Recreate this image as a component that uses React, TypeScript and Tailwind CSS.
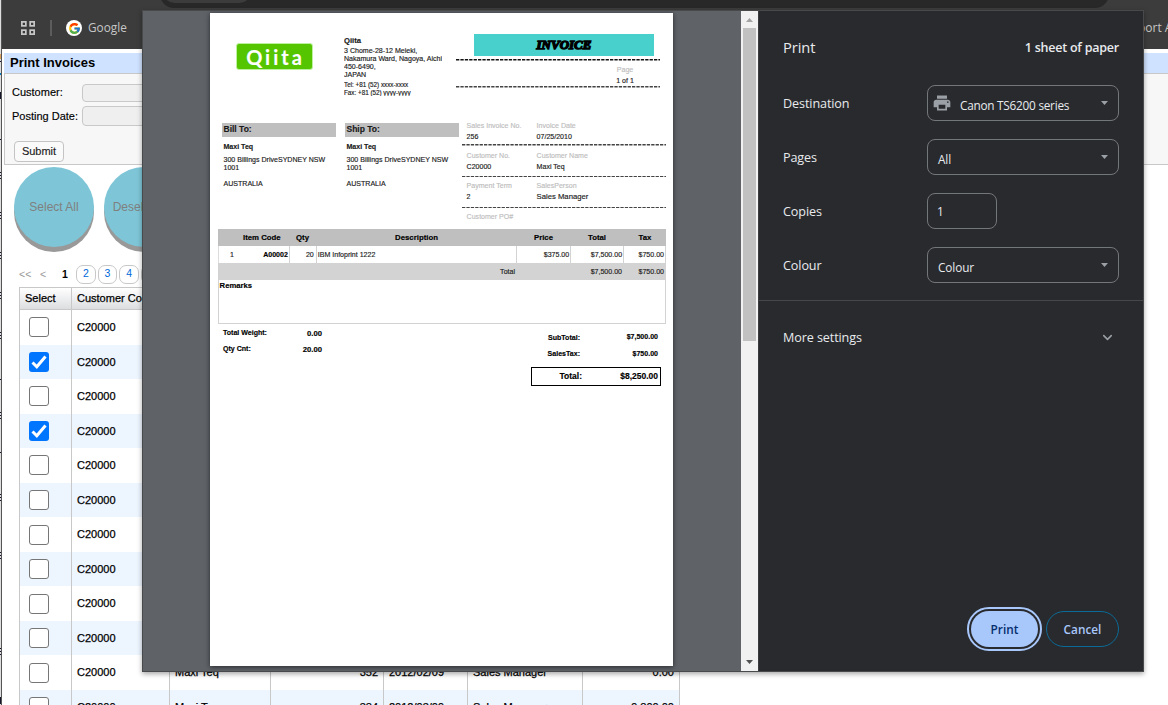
import { ReactNode } from 'react';
import { ChevronDown } from 'lucide-react';
import { FcGoogle } from 'react-icons/fc';
import { MdPrint } from 'react-icons/md';

interface InvoiceRow {
  customer: string;
  name: string;
  number: string;
  date: string;
  person: string;
  amount: string;
  checked?: boolean;
}

const base = { customer: 'C20000', name: 'Maxi Teq', number: '', date: '', person: '', amount: '' };

const rows: InvoiceRow[] = [
  base,
  { ...base, checked: true },
  base,
  { ...base, checked: true },
  base,
  base,
  base,
  base,
  base,
  base,
  { ...base, number: '352', date: '2012/02/09', person: 'Sales Manager', amount: '0.00' },
  { ...base, number: '384', date: '2012/03/09', person: 'Sales Manager', amount: '9,800.00' },
];

const Checkbox = ({ checked }: { checked?: boolean }) =>
  checked ? (
    <span className="block size-5 rounded-[3px] bg-[#0075ff]">
      <svg className="size-5" viewBox="0 0 20 20" fill="none" stroke="white" strokeWidth="3">
        <path d="M3.5 10.5 L7.8 14.8 L16.5 4.5" />
      </svg>
    </span>
  ) : (
    <span className="block size-5 rounded-[3px] border border-[#767676] bg-white" />
  );

// Sliver of the window that sits behind the browser
const BackgroundEdge = () => (
  <svg className="h-[705px] w-px shrink-0 bg-[#dedede]" viewBox="0 0 1 705" fill="#16162a">
    <rect y="54" width="1" height="5" fill="#d9a15c" />
    <rect y="61" width="1" height="1" />
    <rect y="73" width="1" height="2" fill="#0a7abf" />
    <rect y="92" width="1" height="7" />
    <rect y="139" width="1" height="1" />
    {[172, 212, 252, 292, 332, 412, 494, 552, 648].map((y) => (
      <g key={y}>
        <rect y={y} width="1" height="1" />
        <rect y={y + 3} width="1" height="1" />
        <rect y={y + 6} width="1" height="1" />
      </g>
    ))}
    <rect y="379" width="1" height="1" />
    <rect y="452" width="1" height="1" />
    <rect y="697" width="1" height="7" />
  </svg>
);

const Toolbar = () => (
  <div className="relative flex h-[49px] shrink-0 items-center overflow-hidden bg-[#3c3c3c] pt-[7px] font-['Open_Sans',sans-serif] text-[12px] text-[#c7c7c7] [-webkit-text-stroke:0]">
    <div className="absolute -top-5 left-[158px] h-7 w-[949px] rounded-full bg-[#282828]">
      <div className="ml-[3px] h-[23px] w-[88px] rounded-full bg-[#3c3c3c]" />
    </div>
    <svg className="ml-[19px] size-[14px]" viewBox="0 0 14 14" fill="none" stroke="#c7c7c7" strokeWidth="1.7">
      <rect x="0.85" y="0.85" width="4" height="4" />
      <rect x="9.15" y="0.85" width="4" height="4" />
      <rect x="0.85" y="9.15" width="4" height="4" />
      <rect x="9.15" y="9.15" width="4" height="4" />
    </svg>
    <span className="ml-[15px] h-4 w-0.5 bg-[#5c5c5c]" />
    <span className="ml-[14px] flex size-4 items-center justify-center rounded-full bg-white">
      <FcGoogle size={13} />
    </span>
    <span className="ml-[6px] text-[11.8px]">Google</span>
    <span className="ml-auto w-[30px] overflow-hidden whitespace-nowrap">port A</span>
  </div>
);

const FilterPanel = () => (
  <div>
    <h1 className="h-5 bg-[#cfe2ff] pl-[6px] text-[13px] leading-[19px] font-bold text-black [-webkit-text-stroke:0]">
      Print Invoices
    </h1>
    <div className="h-[92px] border-y border-l border-[#c8c8c8] bg-[#f7f7f7] pl-[7px] [-webkit-text-stroke:0.15px]">
      <div className="flex pt-[10px]">
        <span className="w-[70px] leading-[17px]">Customer:</span>
        <span className="h-[18px] w-40 rounded-[4px] border border-[#c8c8c8] bg-[#efefef]" />
      </div>
      <div className="mt-1 flex">
        <span className="w-[70px] leading-5">Posting Date:</span>
        <span className="h-5 w-40 rounded-[4px] border border-[#c8c8c8] bg-[#efefef]" />
      </div>
      <button className="mt-[15px] ml-[2px] block h-[21px] w-[50px] rounded-[4px] border border-[#c4c4c4] bg-[#fafafa] text-[#222]">
        Submit
      </button>
    </div>
  </div>
);

const RoundButton = ({ children }: { children: ReactNode }) => (
  <button className="size-20 rounded-full bg-[#7ec6d7] text-[12px] whitespace-nowrap text-[#808080] shadow-[0_5px_#999]">
    {children}
  </button>
);

const cell = 'flex h-full items-center border-r border-[#c8c8c8]';

const InvoiceTable = () => (
  <div className="mt-[3px] ml-[17px] w-[661px] border-t border-l border-[#c8c8c8]">
    <div className="flex h-[22px] border-b border-[#c8c8c8] bg-linear-to-b from-white to-[#dcdee0]">
      <div className={`${cell} w-[52px] pl-[5px]`}>Select</div>
      <div className={`${cell} w-[98px] pl-[5px] whitespace-nowrap`}>Customer Code</div>
      <div className={`${cell} w-[101px] pl-[5px]`}>Customer</div>
    </div>
    {rows.map((row, i) => (
      <div key={i} className="flex h-[34.55px] odd:bg-[#edf5ff] even:bg-white">
        <div className={`${cell} w-[52px] pl-[9px]`}>
          <Checkbox checked={row.checked} />
        </div>
        <div className={`${cell} w-[98px] pl-[5px]`}>{row.customer}</div>
        <div className={`${cell} w-[101px] pl-[5px]`}>{row.name}</div>
        <div className={`${cell} w-[113px] justify-end pr-[5px]`}>{row.number}</div>
        <div className={`${cell} w-[84px] pl-[5px]`}>{row.date}</div>
        <div className={`${cell} w-[115px] pl-[5px]`}>{row.person}</div>
        <div className={`${cell} w-[97px] justify-end pr-[5px]`}>{row.amount}</div>
      </div>
    ))}
  </div>
);

const Address = ({ title }: { title: string }) => (
  <div className="w-[114px] shrink-0">
    <div className="h-[14px] bg-[#bfbfbf] pl-[1.5px] text-[8.5px] leading-[13px] font-bold">{title}</div>
    <div className="mt-[5px] pl-[1.5px] leading-[9px] font-bold">Maxi Teq</div>
    <div className="mt-[5px] pl-[1.5px] whitespace-nowrap">300 Billings DriveSYDNEY NSW</div>
    <div className="pl-[1.5px]">1001</div>
    <div className="mt-2 pl-[1.5px]">AUSTRALIA</div>
  </div>
);

const DashedLine = ({ dark }: { dark?: boolean }) => (
  <svg className="block h-[1.5px] w-[204px]" viewBox="0 0 204 1.5" preserveAspectRatio="none">
    <line x1="0" y1="0.75" x2="204" y2="0.75" stroke={dark ? '#111' : '#444'} strokeWidth="1.5" strokeDasharray="3.3 1.1" />
  </svg>
);

const Pair = ({ labels, values }: { labels: string[]; values: string[] }) => (
  <div className="h-[30px] pt-[3px]">
    <div className="flex h-[11px] text-[#bdbdbd]">
      <span className="w-[70px] whitespace-nowrap">{labels[0]}</span>
      <span className="whitespace-nowrap">{labels[1]}</span>
    </div>
    <div className="flex">
      <span className="w-[70px]">{values[0]}</span>
      <span className={values[1] === 'Sales Manager' ? 'text-[7.7px]' : ''}>{values[1]}</span>
    </div>
  </div>
);

const InvoicePage = () => (
  <div className="h-[653px] w-[463px] overflow-hidden bg-white font-['Liberation_Sans',Arial,sans-serif] text-[7.05px] leading-[8px] text-[#1a1a1a] shadow-[0_1px_5px_rgba(0,0,0,0.6)] [-webkit-text-stroke:0.15px]">
    <div className="flex h-[216px]">
      <div className="w-[246px] shrink-0 pl-3">
        <div className="flex h-[110px]">
          <div className="mt-[30px] ml-[14px] flex h-[27px] w-[77px] items-center justify-center rounded-[3px] border border-[#bdf09f] bg-[#55c500] pl-[2px] font-['Lato',sans-serif] text-[20px] leading-none font-bold tracking-[3px] text-white">
            Qiita
          </div>
          <div className="mt-[24px] ml-[31px] h-[58.5px] overflow-hidden whitespace-nowrap">
            <div className="text-[7.7px] font-bold">Qiita</div>
            <div className="mt-[2px]">3 Chome-28-12 Meieki,</div>
            <div>Nakamura Ward, Nagoya, Aichi</div>
            <div>450-6490,</div>
            <div>JAPAN</div>
            <div className="mt-[2px] text-[6.3px]">Tel: +81 (52) xxxx-xxxx</div>
            <div className="text-[6.3px]">Fax: +81 (52) yyyy-yyyy</div>
          </div>
        </div>
        <div className="flex gap-[9px]">
          <Address title="Bill To:" />
          <Address title="Ship To:" />
        </div>
      </div>
      <div>
        <div className="mt-[21px] ml-[18px] flex h-[22px] w-[180px] items-center justify-center bg-[#48d1cc] pb-px font-['Liberation_Serif',serif] text-[13px] leading-none font-bold text-black italic [-webkit-text-stroke:1.4px_black]">
          INVOICE
        </div>
        <div className="mt-[3px]">
          <DashedLine dark />
        </div>
        <div className="flex h-[25.5px] flex-col items-center gap-[3px] pt-[5px] pl-[132px]">
          <span className="-ml-[4px] text-[#bdbdbd]">Page</span>
          <span className="-ml-[4px]">1 of 1</span>
        </div>
        <DashedLine />
        <div className="mt-[34.5px] ml-[6px]">
          <div className="-mt-[3px] pl-[4.6px]">
            <Pair labels={['Sales Invoice No.', 'Invoice Date']} values={['256', '07/25/2010']} />
          </div>
          <div className="-mt-[5px]">
            <DashedLine />
          </div>
          <div className="pt-[3px] pl-[4.6px]">
            <Pair labels={['Customer No.', 'Customer Name']} values={['C20000', 'Maxi Teq']} />
          </div>
          <div className="-mt-[3px]">
            <DashedLine />
          </div>
          <div className="pt-[1.5px] pl-[4.6px]">
            <Pair labels={['Payment Term', 'SalesPerson']} values={['2', 'Sales Manager']} />
          </div>
          <div className="-mt-[2px]">
            <DashedLine />
          </div>
          <div className="pt-[4.5px] pl-[4.6px] text-[#bdbdbd]">Customer PO#</div>
        </div>
      </div>
    </div>

    <div className="ml-2 w-[448px]">
      <div className="flex h-[17px] items-center bg-[#bfbfbf] text-[7.8px] font-bold text-black">
        <span className="w-[71px] pl-[25px] whitespace-nowrap">Item Code</span>
        <span className="w-[27px] text-center">Qty</span>
        <span className="w-[201px] text-center">Description</span>
        <span className="w-[53px] text-center">Price</span>
        <span className="w-[54px] text-center">Total</span>
        <span className="w-[42px] text-center">Tax</span>
      </div>
      <div className="flex h-[17px] border-l border-[#ddd] text-right leading-[17px] *:border-r *:border-[#d3d3d3]">
        <span className="flex w-[71px] justify-between pr-px pl-[11px]">
          <span>1</span>
          <b className="text-black">A00002</b>
        </span>
        <span className="w-[27px] pr-[2px]">20</span>
        <span className="w-[201px] pl-px text-left">IBM Infoprint 1222</span>
        <span className="w-[54px] pr-px">$375.00</span>
        <span className="w-[53px] pr-px">$7,500.00</span>
        <span className="w-[42px] pr-px">$750.00</span>
      </div>
      <div className="flex h-[17px] bg-[#d3d3d3] text-right leading-[17px]">
        <span className="w-[297px]">Total</span>
        <span className="w-[107px]">$7,500.00</span>
        <span className="w-[42px]">$750.00</span>
      </div>
      <div className="h-[44px] border-x border-b border-[#d3d3d3] pt-[2px] pl-[0.6px] text-[7.7px] font-bold text-black">
        Remarks
      </div>
    </div>

    <div className="flex font-bold text-black">
      <div className="w-[112px] pt-[5px] pl-[13px]">
        <div className="flex h-4 items-start justify-between">
          <span>Total Weight:</span>
          <span className="pt-px text-[7.7px]">0.00</span>
        </div>
        <div className="flex items-start justify-between">
          <span>Qty Cnt:</span>
          <span className="pt-px text-[7.7px]">20.00</span>
        </div>
      </div>
      <div className="ml-[209px] w-[130px] pt-[9px]">
        <div className="flex h-4">
          <span className="w-[49px] pt-px text-right">SubTotal:</span>
          <span className="ml-auto pr-[3px]">$7,500.00</span>
        </div>
        <div className="flex pt-px">
          <span className="w-[49px] text-right">SalesTax:</span>
          <span className="ml-auto pr-[3px]">$750.00</span>
        </div>
        <div className="mt-[9px] flex h-[19px] items-center border border-black pr-[2px] pb-px text-[8.5px]">
          <span className="w-[50px] text-right">Total:</span>
          <span className="ml-auto">$8,250.00</span>
        </div>
      </div>
    </div>
  </div>
);

const Setting = ({ label, children }: { label: string; children: ReactNode }) => (
  <div className="flex h-9 items-center">
    <span className="w-36 pt-[3px] text-[12.6px]">{label}</span>
    {children}
  </div>
);

const Select = ({ icon, children }: { icon?: ReactNode; children: ReactNode }) => (
  <div className="flex h-9 w-48 items-center rounded-lg border border-[#74777a] pr-[10px] pl-[10px]">
    {icon}
    <span className="pt-[5px]">{children}</span>
    <svg className="ml-auto h-1 w-[7px]" viewBox="0 0 7 4" fill="#9aa0a6">
      <path d="M0 0h7L3.5 4z" />
    </svg>
  </div>
);

const PrintSettings = () => (
  <div className="flex flex-1 flex-col border-l border-[#3b3c3e] bg-[#292a2d] font-['Open_Sans',sans-serif] text-[11.8px] tracking-[-0.1px] text-[#e8eaed]">
    <div className="flex h-[74px] items-center justify-between pr-6 pl-6">
      <h2 className="pb-[2px] text-[14.7px]">Print</h2>
      <span className="text-[12.5px] font-semibold tracking-[-0.22px]">1 sheet of paper</span>
    </div>
    <div className="flex flex-col gap-[18px] pl-6">
      <Setting label="Destination">
        <Select icon={<MdPrint className="mr-[8px] -ml-[6px] shrink-0" size={20} color="#9aa0a6" />}>
          <span className="tracking-[-0.25px]">Canon TS6200 series</span>
        </Select>
      </Setting>
      <Setting label="Pages">
        <Select>All</Select>
      </Setting>
      <Setting label="Copies">
        <div className="h-9 w-[70px] rounded-lg border border-[#74777a] pl-[9px] leading-[35px]">1</div>
      </Setting>
      <Setting label="Colour">
        <Select>Colour</Select>
      </Setting>
    </div>
    <div className="mt-[17px] flex h-[74px] items-center justify-between border-t border-[#45474a] pr-[28px] pl-6 text-[12.6px]">
      <span className="pt-[2px]">More settings</span>
      <ChevronDown size={15} color="#9aa0a6" strokeWidth={2.5} />
    </div>
    <div className="mt-auto mb-6 flex justify-end gap-2 pr-6 font-semibold tracking-normal">
      <button className="h-9 w-[67px] rounded-full bg-[#a8c7fa] pt-px text-[#062e6f] outline-2 outline-offset-2 outline-[#a8c7fa]">
        Print
      </button>
      <button className="h-9 w-[73px] rounded-full border border-[#0b6b98] pt-px text-[#a8c7fa]">Cancel</button>
    </div>
  </div>
);

const PrintDialog = () => (
  <div className="absolute top-[10px] left-[142px] flex h-[662px] w-[1002px] border border-[#47494b] bg-[#5f6368] shadow-[0_2px_5px_rgba(0,0,0,0.35)]">
    <div className="w-[598px] overflow-hidden pt-[2px] pl-[67px]">
      <InvoicePage />
    </div>
    <div className="flex w-[17px] flex-col items-center bg-[#f1f1f1]">
      <svg className="h-[17px] w-[7px]" viewBox="0 0 7 17" fill="#a3a3a3">
        <path d="M0 11h7L3.5 7z" />
      </svg>
      <div className="h-[313px] w-[13px] bg-[#c1c1c1]" />
      <svg className="mt-auto h-[17px] w-[7px]" viewBox="0 0 7 17" fill="#505050">
        <path d="M0 6h7L3.5 10z" />
      </svg>
    </div>
    <PrintSettings />
  </div>
);

export default function App() {
  return (
    <div className="relative flex h-[705px] w-[1168px] overflow-hidden bg-white">
      <BackgroundEdge />
      <div className="flex min-w-0 flex-1 flex-col border-l border-[#555] font-['Liberation_Sans',Arial,sans-serif] text-[11px] text-black [-webkit-text-stroke:0.25px]">
        <Toolbar />
        <div className="pt-1 pl-[2px]">
          <FilterPanel />
        </div>
        <div className="flex gap-[10px] pt-[2px] pl-3 [-webkit-text-stroke:0]">
          <RoundButton>Select All</RoundButton>
          <RoundButton>Deselect All</RoundButton>
        </div>
        <div className="mt-[18px] flex h-5 items-center pl-[17px] [-webkit-text-stroke:0]">
          <span className="w-[21px] text-[10.5px] text-[#999]">&lt;&lt;</span>
          <span className="w-[22px] text-[10.5px] text-[#999]">&lt;</span>
          <b className="w-[14px] text-[10.5px]">1</b>
          <div className="flex gap-[2px] text-[10.5px] text-[#0069d9]">
            {[2, 3, 4, 5].map((page) => (
              <span
                key={page}
                className="flex h-[19px] w-[19.7px] items-center justify-center rounded-[7px] border border-[#c8c8c8] pb-px"
              >
                {page}
              </span>
            ))}
          </div>
        </div>
        <InvoiceTable />
      </div>
      <PrintDialog />
    </div>
  );
}
